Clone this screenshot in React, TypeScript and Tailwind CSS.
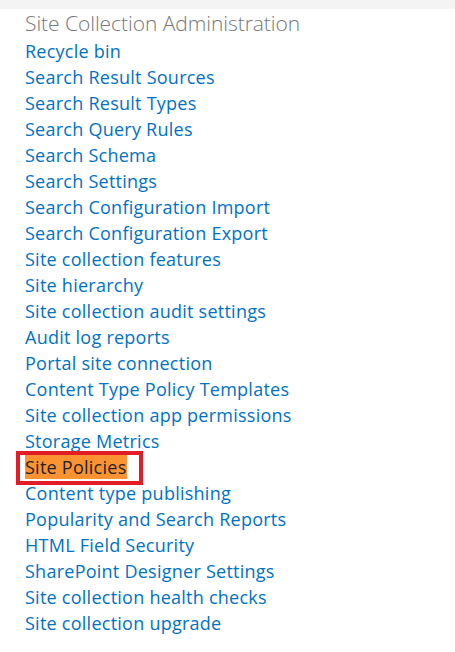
import React from "react";

const links = [
  "Recycle bin",
  "Search Result Sources",
  "Search Result Types",
  "Search Query Rules",
  "Search Schema",
  "Search Settings",
  "Search Configuration Import",
  "Search Configuration Export",
  "Site collection features",
  "Site hierarchy",
  "Site collection audit settings",
  "Audit log reports",
  "Portal site connection",
  "Content Type Policy Templates",
  "Site collection app permissions",
  "Storage Metrics",
  "Site Policies",
  "Content type publishing",
  "Popularity and Search Reports",
  "HTML Field Security",
  "SharePoint Designer Settings",
  "Site collection health checks",
  "Site collection upgrade",
];

export default function App() {
  return (
    <div className="w-[455px] h-[652px] bg-white overflow-hidden" style={{ fontFamily: '"Open Sans", "Noto Sans", sans-serif' }}>
      <div className="h-[9px] bg-[#f4f4f4]" />
      <div className="pl-[25px]">
        <div className="h-[28px] leading-[28px] text-[21px] font-light text-[#777777] tracking-[-0.05px]">
          Site Collection Administration
        </div>
        <ul className="mt-[1px] tracking-[0.25px]">
          {links.map((l) =>
            l === "Site Policies" ? (
              <li key={l} className="h-[26px] leading-[26px] text-[18px] relative">
                <span className="bg-[#fb9332] text-[#222222] pr-[1px] inline-block leading-[24px]">{l}</span>
                <span className="absolute left-[-9px] top-[-3px] w-[127px] h-[34px] border-[4px] border-[#e21d25]" />
              </li>
            ) : (
              <li key={l} className="h-[26px] leading-[26px] text-[18px] text-[#0072c6]">
                {l}
              </li>
            )
          )}
        </ul>
      </div>
    </div>
  );
}
